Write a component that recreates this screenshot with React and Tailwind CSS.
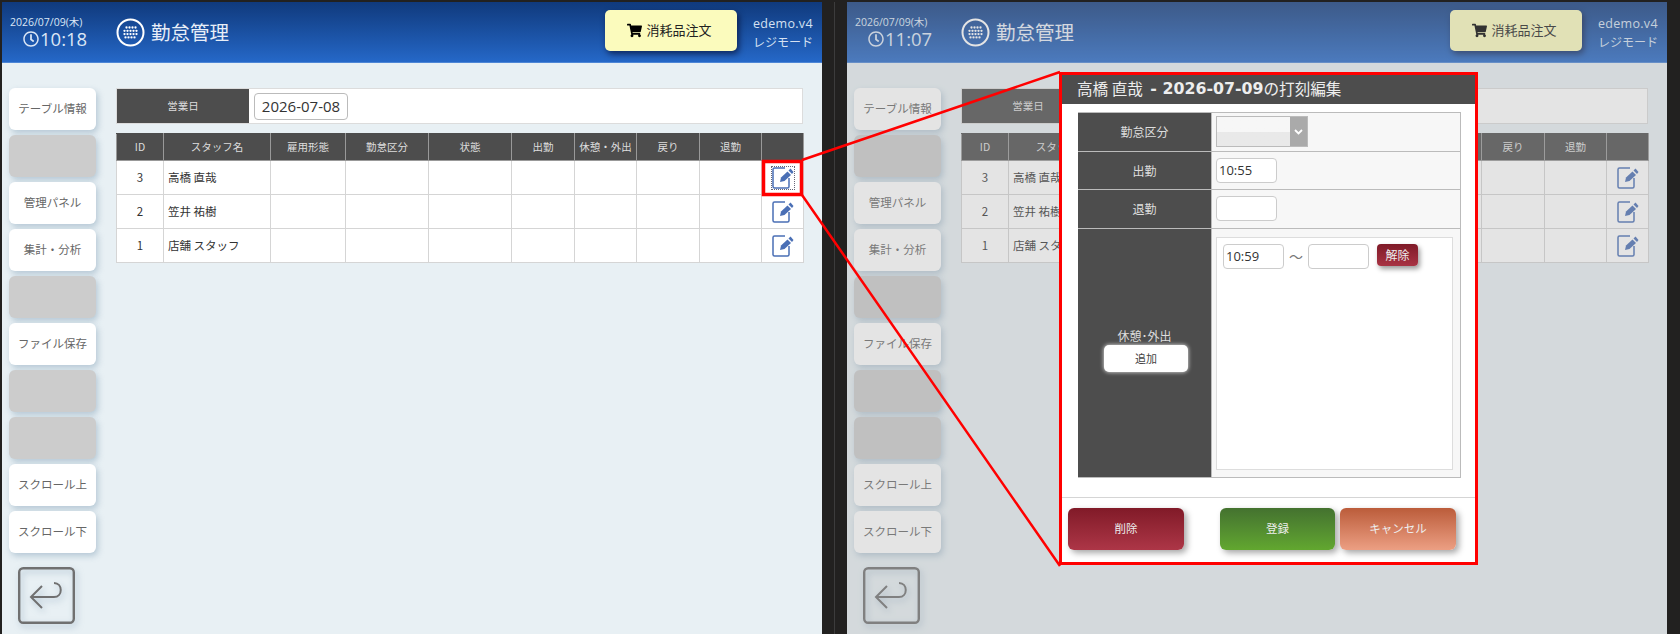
import React from "react";
import { FaShoppingCart, FaRegClock } from "react-icons/fa";

const jpFont = "font-['Noto_Sans_CJK_JP','Noto_Sans',sans-serif]";
const mixFont = "font-['Open_Sans','Noto_Sans_CJK_JP',sans-serif]";

const sideItems = [
  "テーブル情報",
  "",
  "管理パネル",
  "集計・分析",
  "",
  "ファイル保存",
  "",
  "",
  "スクロール上",
  "スクロール下",
];

const columns = [
  { label: "ID", width: "w-[47px]" },
  { label: "スタッフ名", width: "w-[107px]" },
  { label: "雇用形態", width: "w-[75px]" },
  { label: "勤怠区分", width: "w-[83px]" },
  { label: "状態", width: "w-[83px]" },
  { label: "出勤", width: "w-[63px]" },
  { label: "休憩・外出", width: "w-[62px]" },
  { label: "戻り", width: "w-[63px]" },
  { label: "退勤", width: "w-[62px]" },
  { label: "", width: "w-[42px]" },
];

const staff = [
  { id: 3, name: "高橋 直哉" },
  { id: 2, name: "笠井 祐樹" },
  { id: 1, name: "店舗 スタッフ" },
];

const EditIcon = () => (
  <svg className="block" width="22" height="22" viewBox="0 0 22 22" fill="none">
    <path
      d="M13 1H2.5A1.5 1.5 0 0 0 1 2.5v17A1.5 1.5 0 0 0 2.5 21h13a1.5 1.5 0 0 0 1.5-1.5V11"
      stroke="#4a6fb5"
      strokeWidth="1.5"
    />
    <path d="M8 15l1-4.5 6.5-6 3.5 3.5-6.5 6z" fill="#4a6fb5" />
    <path d="M16.5 3.5l2-2 3 3.5-1.5 2z" fill="#4a6fb5" />
  </svg>
);

// dot grid trimmed to the circle
const menuDots = [
  [10.5, 13.5, 16.5, 19.5].map((x) => [x, 9.5]),
  [8.5, 11.5, 14.5, 17.5, 20.5].map((x) => [x, 12.8]),
  [8.5, 11.5, 14.5, 17.5, 20.5].map((x) => [x, 16.1]),
  [9.5, 12.5, 15.5, 18.5].map((x) => [x, 19.4]),
].flat();

const MenuIcon = () => (
  <svg width="29" height="29" viewBox="0 0 29 29" fill="none">
    <circle cx="14.5" cy="14.5" r="13" stroke="#fff" strokeWidth="2" />
    {menuDots.map(([x, y]) => (
      <circle key={`${x}-${y}`} cx={x} cy={y} r="1.15" fill="#fff" />
    ))}
  </svg>
);

const BackIcon = () => (
  <svg width="57" height="57" viewBox="0 0 57 57" fill="none">
    <rect x="1.2" y="1.2" width="54.6" height="54.6" rx="4" stroke="#707070" strokeWidth="2.4" />
    <path
      d="M14 30h22c9 0 9-14 0-14M24 19 13 30l11 11"
      stroke="#707070"
      strokeWidth="2"
    />
  </svg>
);

const Screen = ({ date, time, dimmed }) => (
  <div className={`relative w-[820px] h-[632px] shrink-0 bg-[#e8f0f4] overflow-hidden ${jpFont}`}>
    {/* Header */}
    <header className="h-[61px] flex items-center bg-gradient-to-b from-[#103a7d] to-[#2568c8] border-b border-[#4d86d6]">
      <div className={`w-[100px] pl-2 text-[#dbe6f5] ${mixFont}`}>
        <div className="text-[10.5px] leading-[14px] whitespace-nowrap">{date}</div>
        <div className="flex items-center gap-[1px] pl-[13px] text-[18.5px] leading-[20px]">
          <FaRegClock className="text-[16px]" />
          {time}
        </div>
      </div>
      <div className="flex items-center gap-[6px] pl-[14px] text-[#e8eef8]">
        <MenuIcon />
        <span className="text-[19.5px]">勤怠管理</span>
      </div>
      <button className="ml-auto mb-[4px] w-[132px] h-[41px] pr-[3px] flex items-center justify-center gap-[4px] rounded-[5px] bg-[#fbfbbd] text-[13px] text-[#222] shadow-[2px_3px_6px_rgba(0,0,30,0.6)]">
        <FaShoppingCart className="text-[15px] text-black" />
        消耗品注文
      </button>
      <div className={`w-[85px] pl-[16px] pt-[2px] text-[#d5e1f2] whitespace-nowrap ${mixFont}`}>
        <div className="text-[12.5px] leading-[19px] tracking-[0.3px]">edemo.v4</div>
        <div className="text-[12px] leading-[19px]">レジモード</div>
      </div>
    </header>

    <div className="flex">
      {/* Side menu */}
      <aside className="w-[114px] shrink-0 pl-[7px] pt-[25px] flex flex-col gap-[5px]">
        {sideItems.map((label, i) => (
          <button
            key={i}
            className={`w-[87px] h-[42px] rounded-[6px] text-[11.5px] text-[#666] shadow-[2px_3px_6px_rgba(120,150,175,0.45)] ${
              label ? "bg-white" : "bg-[#cccccc]"
            }`}
          >
            {label}
          </button>
        ))}
        <div className="pl-[9px] pt-[9px] drop-shadow-[2px_3px_3px_rgba(120,150,175,0.5)]">
          <BackIcon />
        </div>
      </aside>

      {/* Main */}
      <main className="w-[687px] pt-[25px]">
        <div className="h-[36px] flex items-center bg-white border border-[#dcdcdc]">
          <div className="w-[132px] h-full flex items-center justify-center bg-[#4d4d4d] text-[10.5px] text-[#ddd]">
            営業日
          </div>
          <div className={`ml-[5px] w-[94px] h-[27px] flex items-center justify-center rounded-[4px] border border-[#bbb] text-[15px] text-[#333] ${mixFont}`}>
            2026-07-08
          </div>
        </div>

        <table className="mt-[9px] w-[687px] table-fixed border-collapse bg-white">
          <thead>
            <tr className="h-[27px] bg-[#4d4d4d]">
              {columns.map((col, i) => (
                <th
                  key={i}
                  className={`${col.width} border border-[#999] border-t-[#4d4d4d] p-0 text-[10.5px] font-normal text-[#ddd] whitespace-nowrap`}
                >
                  {col.label}
                </th>
              ))}
            </tr>
          </thead>
          <tbody>
            {staff.map((s, i) => (
              <tr key={s.id} className="h-[34px]">
                <td className="border border-[#d5d5d5] p-0 text-center text-[11.5px] text-[#333]">{s.id}</td>
                <td className="border border-[#d5d5d5] pl-[4px] pr-0 py-0 text-[11.5px] text-[#333] whitespace-nowrap">{s.name}</td>
                {columns.slice(2, 9).map((col) => (
                  <td key={col.label} className="border border-[#d5d5d5] p-0" />
                ))}
                <td className="border border-[#d5d5d5] p-0">
                  <div className="flex justify-center">
                    {/* first row keeps the focus ring of the clicked link */}
                    <div className={i === 0 && !dimmed ? "outline-1 outline-dotted outline-[#667]" : ""}>
                      <EditIcon />
                    </div>
                  </div>
                </td>
              </tr>
            ))}
          </tbody>
        </table>
      </main>
    </div>

    {dimmed && <div className="absolute inset-0 bg-[#a6a6a6]/30" />}
  </div>
);

const Cell = ({ label, height, children }) => (
  <div className={`flex ${height} border-b border-[#bbb]`}>
    <div className="w-[134px] shrink-0 flex items-center justify-center bg-[#4d4d4d] text-[12px] text-[#ddd] border-r border-[#bbb]">
      {label}
    </div>
    <div className="flex-1 bg-[#f7f7f7] pl-[4px]">{children}</div>
  </div>
);

const TimeInput = ({ value, className = "" }) => (
  <div className={`w-[61px] h-[25px] flex items-center pl-[2px] rounded-[4px] border-[1.5px] border-[#ccc] bg-white text-[13px] text-[#333] ${mixFont} ${className}`}>
    {value}
  </div>
);

const Modal = () => (
  <div className={`absolute left-[1062px] top-[75px] w-[413px] h-[487px] bg-white flex flex-col ${jpFont}`}>
    <div className="h-[29px] shrink-0 flex items-center pl-[15px] pb-[1px] bg-[#4d4d4d] text-[15.6px] text-[#eee] whitespace-nowrap">
      <span>高橋 直哉</span>
      <span className="pl-[2px] font-['DejaVu_Sans',sans-serif] font-bold text-[15.8px]">&nbsp;- 2026-07-09</span>
      <span>の打刻編集</span>
    </div>
    <div className="mt-[8px] mx-[16px] w-[383px] h-[366px] border border-[#bbb] border-l-0 flex flex-col">
      <Cell label="勤怠区分" height="h-[39px]">
        <div className="mt-[3px] w-[92px] h-[31px] flex border border-[#bbb]">
          <div className="flex-1 bg-gradient-to-b from-[#f7f7f7] from-50% to-[#e9e9e9] to-50%" />
          <div className="w-[17px] flex items-center justify-center bg-[#aaa]">
            <svg width="9" height="6" viewBox="0 0 9 6" fill="none">
              <path d="M1 1l3.5 3.5L8 1" stroke="#fff" strokeWidth="1.8" />
            </svg>
          </div>
        </div>
      </Cell>
      <Cell label="出勤" height="h-[38px]">
        <TimeInput value="10:55" className="mt-[6px]" />
      </Cell>
      <Cell label="退勤" height="h-[39px]">
        <TimeInput className="mt-[6px]" />
      </Cell>
      <div className="flex flex-1">
        <div className="w-[134px] shrink-0 flex flex-col items-center justify-center gap-[1px] pb-[8px] bg-[#4d4d4d] text-[12px] text-[#ddd] border-r border-[#bbb]">
          <span className="leading-[17px]">休憩･外出</span>
          <button className="ml-[3px] w-[84px] h-[27px] rounded-[5px] bg-white text-[11px] text-[#444] shadow-[0_0_4px_rgba(255,255,255,0.9)]">
            追加
          </button>
        </div>
        <div className="flex-1 bg-[#f7f7f7] pl-[4px] pt-[8px]">
          <div className="w-[237px] h-[233px] border border-[#ddd] bg-white pl-[6px] pt-[6px] flex items-start">
            <TimeInput value="10:59" />
            <span className="w-[24px] text-center text-[14px] leading-[24px] text-[#777]">～</span>
            <TimeInput />
            <button className="ml-[8px] w-[41px] h-[22px] rounded-[4px] bg-gradient-to-b from-[#7f1a28] to-[#a83344] text-[12px] text-[#eee] shadow-[2px_3px_5px_rgba(0,0,0,0.4)]">
              解除
            </button>
          </div>
        </div>
      </div>
    </div>
    <div className="mt-[19px] pt-[10px] pl-[6px] border-t border-[#d5d5d5] flex">
      <button className="w-[116px] h-[42px] rounded-[6px] bg-gradient-to-b from-[#811a28] to-[#ad3647] text-[11.5px] text-[#eee] shadow-[3px_3px_6px_rgba(0,0,0,0.35)]">
        削除
      </button>
      <button className="ml-[36px] w-[115px] h-[42px] rounded-[6px] bg-gradient-to-b from-[#44722f] to-[#62a72f] text-[11.5px] text-[#eee] shadow-[3px_3px_6px_rgba(0,0,0,0.35)]">
        登録
      </button>
      <button className="ml-[5px] w-[116px] h-[42px] rounded-[6px] bg-gradient-to-b from-[#bb5c3a] to-[#ec9f83] text-[11.5px] text-[#eee] shadow-[3px_3px_6px_rgba(0,0,0,0.35)]">
        キャンセル
      </button>
    </div>
  </div>
);

export default function App() {
  return (
    <div className="relative w-[1680px] h-[634px] overflow-hidden bg-[#222120] pt-[2px] pl-[2px]">
      <div className="flex">
        <Screen date="2026/07/09(木)" time="10:18" />
        <div className="w-[25px] h-[632px] shrink-0 flex justify-center">
          <div className="w-px bg-[#3c3c3c]" />
        </div>
        <Screen date="2026/07/09(木)" time="11:07" dimmed />
      </div>

      {/* Callout drawn on top of the screenshots */}
      <svg className="absolute inset-0 pointer-events-none" width="1680" height="634" fill="none">
        <rect x="763.5" y="161.5" width="38" height="33" stroke="#f00" strokeWidth="3.5" />
        <path d="M802 160 1060 72M802 195 1060 566" stroke="#f00" strokeWidth="2.5" />
      </svg>
      <div className="absolute left-[1059px] top-[72px] w-[419px] h-[493px] border-[3px] border-[#f00]" />
      <Modal />
    </div>
  );
}
